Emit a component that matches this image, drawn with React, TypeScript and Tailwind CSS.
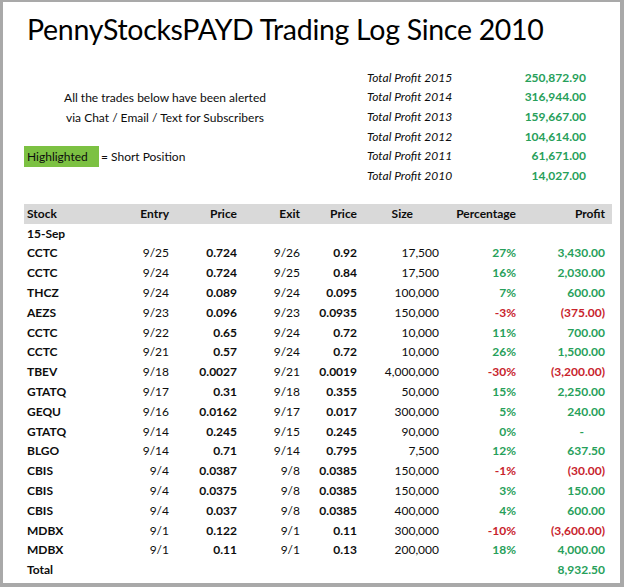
import React from "react";

const profits = [
  { year: "2015", value: "250,872.90" },
  { year: "2014", value: "316,944.00" },
  { year: "2013", value: "159,667.00" },
  { year: "2012", value: "104,614.00" },
  { year: "2011", value: "61,671.00" },
  { year: "2010", value: "14,027.00" },
];

type Trade = {
  stock: string;
  entry: string;
  buy: string;
  exit: string;
  sell: string;
  size: string;
  pct: string;
  profit: string;
};

const trades: Trade[] = [
  { stock: "CCTC", entry: "9/25", buy: "0.724", exit: "9/26", sell: "0.92", size: "17,500", pct: "27%", profit: "3,430.00" },
  { stock: "CCTC", entry: "9/24", buy: "0.724", exit: "9/25", sell: "0.84", size: "17,500", pct: "16%", profit: "2,030.00" },
  { stock: "THCZ", entry: "9/24", buy: "0.089", exit: "9/24", sell: "0.095", size: "100,000", pct: "7%", profit: "600.00" },
  { stock: "AEZS", entry: "9/23", buy: "0.096", exit: "9/23", sell: "0.0935", size: "150,000", pct: "-3%", profit: "(375.00)" },
  { stock: "CCTC", entry: "9/22", buy: "0.65", exit: "9/24", sell: "0.72", size: "10,000", pct: "11%", profit: "700.00" },
  { stock: "CCTC", entry: "9/21", buy: "0.57", exit: "9/24", sell: "0.72", size: "10,000", pct: "26%", profit: "1,500.00" },
  { stock: "TBEV", entry: "9/18", buy: "0.0027", exit: "9/21", sell: "0.0019", size: "4,000,000", pct: "-30%", profit: "(3,200.00)" },
  { stock: "GTATQ", entry: "9/17", buy: "0.31", exit: "9/18", sell: "0.355", size: "50,000", pct: "15%", profit: "2,250.00" },
  { stock: "GEQU", entry: "9/16", buy: "0.0162", exit: "9/17", sell: "0.017", size: "300,000", pct: "5%", profit: "240.00" },
  { stock: "GTATQ", entry: "9/14", buy: "0.245", exit: "9/15", sell: "0.245", size: "90,000", pct: "0%", profit: "-" },
  { stock: "BLGO", entry: "9/14", buy: "0.71", exit: "9/14", sell: "0.795", size: "7,500", pct: "12%", profit: "637.50" },
  { stock: "CBIS", entry: "9/4", buy: "0.0387", exit: "9/8", sell: "0.0385", size: "150,000", pct: "-1%", profit: "(30.00)" },
  { stock: "CBIS", entry: "9/4", buy: "0.0375", exit: "9/8", sell: "0.0385", size: "150,000", pct: "3%", profit: "150.00" },
  { stock: "CBIS", entry: "9/4", buy: "0.037", exit: "9/8", sell: "0.0385", size: "400,000", pct: "4%", profit: "600.00" },
  { stock: "MDBX", entry: "9/1", buy: "0.122", exit: "9/1", sell: "0.11", size: "300,000", pct: "-10%", profit: "(3,600.00)" },
  { stock: "MDBX", entry: "9/1", buy: "0.11", exit: "9/1", sell: "0.13", size: "200,000", pct: "18%", profit: "4,000.00" },
];

const cols = "grid grid-cols-[86px_59px_68px_63px_57px_82px_77px_89px] items-center h-[19.8px]";

export default function App() {
  return (
    <div
      className="w-[624px] h-[587px] bg-[#a9a9a9] pt-[2px] pl-[3px] pr-[4px] pb-[4px] text-[#0d0d0d] text-[12px]"
      style={{ fontFamily: "Lato, 'Open Sans', sans-serif" }}
    >
      <div className="w-full h-full bg-white pl-[21px]">
        <h1 className="pt-[9px] pl-[3px] text-[28.5px] leading-[36px] tracking-[-0.3px] text-black">
          PennyStocksPAYD Trading Log Since 2010
        </h1>

        <div className="flex mt-[21px] h-[136px]">
          <div className="w-[322px]">
            <div className="pt-[20px] text-center leading-[19.5px] w-[282px]">
              <p>All the trades below have been alerted</p>
              <p>via Chat / Email / Text for Subscribers</p>
            </div>
            <div className="flex items-center mt-[19px]">
              <span className="w-[75px] h-[21px] bg-[#7cc142] pl-[3px] leading-[21px]">Highlighted</span>
              <span className="pl-[2px]">= Short Position</span>
            </div>
          </div>
          <div className="w-[240px] pl-[21px]">
            {profits.map((p) => (
              <div key={p.year} className="flex justify-between h-[19.6px] items-center">
                <span className="italic">Total Profit {p.year}</span>
                <span className="font-bold text-[#27a05a]">{p.value}</span>
              </div>
            ))}
          </div>
        </div>

        <div className="w-[588px] font-bold">
          <div className={`${cols} bg-[#d9d9d9]`}>
            <span className="pl-[3px]">Stock</span>
            <span className="text-right">Entry</span>
            <span className="text-right">Price</span>
            <span className="text-right">Exit</span>
            <span className="text-right">Price</span>
            <span className="text-right pr-[26px]">Size</span>
            <span className="text-right">Percentage</span>
            <span className="text-right">Profit</span>
          </div>
          <div className={cols}>
            <span className="pl-[3px]">15-Sep</span>
          </div>
          {trades.map((t, i) => {
            const loss = t.profit.startsWith("(");
            const color = loss ? "text-[#c8232c]" : "text-[#27a05a]";
            // accounting format puts the zero dash in from the edge
            const dash = t.profit === "-";
            return (
              <div key={i} className={cols}>
                <span className="pl-[3px]">{t.stock}</span>
                <span className="text-right font-normal">{t.entry}</span>
                <span className="text-right">{t.buy}</span>
                <span className="text-right font-normal">{t.exit}</span>
                <span className="text-right">{t.sell}</span>
                <span className="text-right font-normal">{t.size}</span>
                <span className={`text-right ${color}`}>{t.pct}</span>
                <span className={`text-right ${color} ${dash ? "pr-[21px]" : ""}`}>{t.profit}</span>
              </div>
            );
          })}
          <div className={cols}>
            <span className="pl-[3px]">Total</span>
            <span />
            <span />
            <span />
            <span />
            <span />
            <span />
            <span className="text-right text-[#27a05a]">8,932.50</span>
          </div>
        </div>
      </div>
    </div>
  );
}
